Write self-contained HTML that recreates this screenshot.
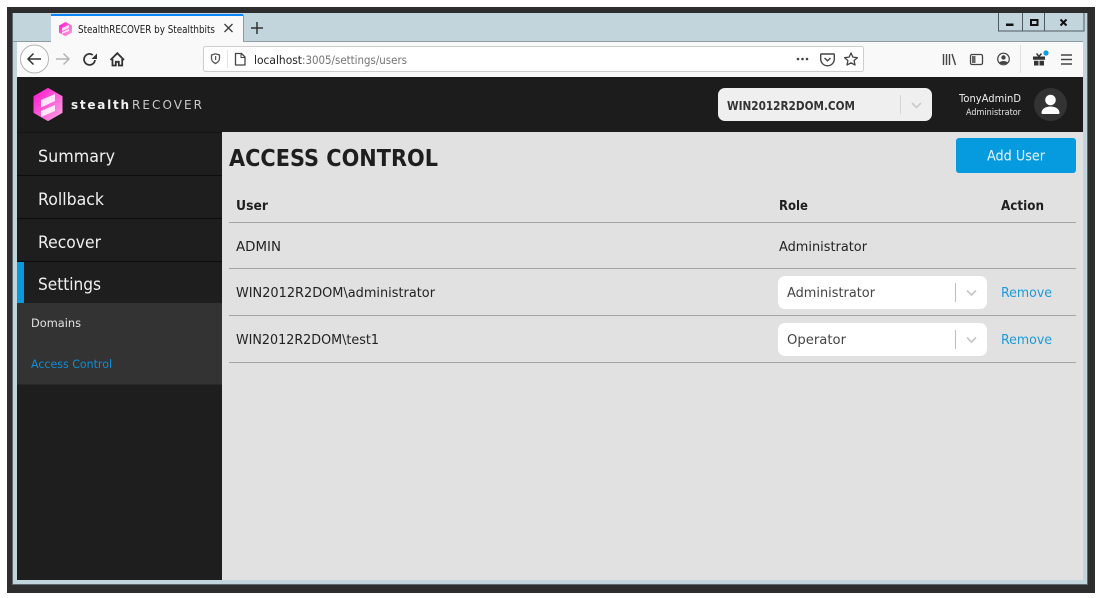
<!DOCTYPE html>
<html lang="en"><head><meta charset="utf-8"><title>StealthRECOVER by Stealthbits</title>
<style>
html,body{margin:0;padding:0;background:#fff;overflow:hidden}
svg{display:block}
text{font-family:"DejaVu Sans","Liberation Sans",sans-serif}
</style></head><body>
<svg xmlns="http://www.w3.org/2000/svg" width="1101" height="598" viewBox="0 0 1101 598">
<defs>
<linearGradient id="g" x1="0" y1="0" x2="1" y2="1"><stop offset="0" stop-color="#ff14cf"/><stop offset="1" stop-color="#ffa4e2"/></linearGradient>
</defs>
<rect width="1101" height="598" fill="#fff"/>
<rect x="7" y="7" width="1088" height="586" fill="#2d2d2d"/>
<rect x="12" y="13" width="1076" height="572" fill="#5f686c"/>
<rect x="13" y="13" width="1074" height="571" fill="#c3d5dc"/>
<rect x="13" y="41" width="1070" height="1" fill="#8d9ca3"/>

<!-- tab -->
<rect x="51" y="14" width="192" height="28" fill="#f9f9fa"/>
<rect x="51" y="14" width="192" height="2" fill="#0a84ff"/>
<rect x="243" y="15" width="1" height="27" fill="#8d9ca3"/>
<path d="M65.500 22.500l6 3.400v6.400l-6 3.400-6-3.400v-6.400z" fill="url(#g)" stroke="url(#g)" stroke-linejoin="round"/><path d="M62 28l7-3v3l-7 3zM62 32l7-3v2l-7 3z" fill="#fff" opacity=".8"/>
<text x="78" y="33" font-size="10.500" fill="#1a1a1a" textLength="137" lengthAdjust="spacingAndGlyphs">StealthRECOVER by Stealthbits</text>
<path d="M224.500 24l8 8M232.500 24l-8 8" stroke="#3c3c3c" stroke-width="1.300" fill="none"/>
<path d="M257 22v12M251 28h12" stroke="#333" stroke-width="1.500" fill="none"/>

<!-- window controls -->
<path d="M998.500 13v18h85.500V13M1022.500 13v18M1044.500 13v18" fill="none" stroke="#4f5a60" stroke-width="1"/>
<rect x="1006" y="23.500" width="7.500" height="2.500" fill="#111"/>
<rect x="1031" y="20" width="6.500" height="5" fill="none" stroke="#111" stroke-width="2"/>
<path d="M1060.500 19.500l6 6M1066.500 19.500l-6 6" stroke="#111" stroke-width="2" fill="none"/>

<!-- toolbar -->
<rect x="17" y="42" width="1066" height="35" fill="#f9f9fa"/>
<circle cx="34.500" cy="59" r="14" fill="#fff" stroke="#b5b5b5"/>
<path d="M41 59H28M33.500 53.500L28 59l5.500 5.500" fill="none" stroke="#333" stroke-width="1.500"/>
<path d="M69 59H56M63.500 53.500L69 59l-5.500 5.500" fill="none" stroke="#b4b4b4" stroke-width="1.500"/>
<path d="M95 60a5.500 5.500 0 1 1-2.200-5" fill="none" stroke="#333" stroke-width="1.700"/><path d="M97 53.500v5.500h-5.500z" fill="#333"/>
<path d="M110.500 60l6.800-6.800L124 60" fill="none" stroke="#333" stroke-width="1.800"/><path d="M112.500 59v6.500h3.300v-3.700h3v3.700h3.400V59" fill="none" stroke="#333" stroke-width="1.800"/>

<rect x="203.500" y="46.500" width="660" height="25" rx="2" fill="#fff" stroke="#cdcdcd"/>
<path d="M211.500 55l4-1.200 4 1.200v3.500c0 2.500-2 4-4 5-2-1-4-2.500-4-5z" fill="none" stroke="#555" stroke-width="1.300"/><rect x="215" y="56" width="1.200" height="4" fill="#555"/>
<rect x="227" y="50" width="1" height="18" fill="#e4e4e4"/>
<path d="M235.500 53.500h6l3.500 3.500v8h-9.500z" fill="none" stroke="#444" stroke-width="1.300" stroke-linejoin="round"/><path d="M241 53.500v4h4" fill="none" stroke="#444" stroke-width="1"/>
<text x="254" y="64" font-size="11.500" fill="#1f1f1f" textLength="48" lengthAdjust="spacingAndGlyphs">localhost</text>
<text x="302" y="64" font-size="11.500" fill="#737373" textLength="105" lengthAdjust="spacingAndGlyphs">:3005/settings/users</text>
<circle cx="798" cy="59" r="1.300" fill="#444"/><circle cx="802.500" cy="59" r="1.300" fill="#444"/><circle cx="807" cy="59" r="1.300" fill="#444"/>
<path d="M821.500 54h12a.8.8 0 0 1 .8.800V59a6.500 6.500 0 0 1-13.600 0v-4.200a.8.800 0 0 1 .8-.800z" fill="none" stroke="#444" stroke-width="1.400"/><path d="M824.500 58l3 2.800 3-2.800" fill="none" stroke="#444" stroke-width="1.400"/>
<path d="M851 53l1.900 4.100 4.500.5-3.300 3 .9 4.400-4-2.200-4 2.200.9-4.400-3.300-3 4.500-.5z" fill="none" stroke="#444" stroke-width="1.300" stroke-linejoin="round"/>
<path d="M943.500 54v11M946.500 54v11M949.500 54v11M952 54l3.500 11" fill="none" stroke="#444" stroke-width="1.400"/>
<rect x="970.500" y="54.500" width="12" height="10" rx="1.500" fill="none" stroke="#444" stroke-width="1.300"/><rect x="972" y="56" width="3.500" height="7" fill="#666"/>
<circle cx="1003.500" cy="59" r="5.800" fill="none" stroke="#444" stroke-width="1.200"/><circle cx="1003.500" cy="57.500" r="2.200" fill="#444"/><path d="M999.500 62.500c1-2 7-2 8 0l-1.500 1.500h-5z" fill="#444"/>
<rect x="1020" y="45" width="1" height="28" fill="#e0e0e0"/>
<path d="M1033 56.500h12v3.300h-12zM1034 60.800h4.500v4.700H1034zM1039.500 60.800h4.500v4.700h-4.500z" fill="#333"/><path d="M1036.500 53.500l2.500 3 2.500-3" fill="none" stroke="#333" stroke-width="1.400"/>
<circle cx="1046" cy="53" r="2.600" fill="#0a9cf5"/>
<path d="M1061 55h11M1061 59.500h11M1061 64h11" stroke="#444" stroke-width="1.400" fill="none"/>

<!-- app header -->
<rect x="17" y="77" width="1066" height="55" fill="#1c1c1c"/>
<path d="M48 89l13.500 7.800v15.400L48 120l-13.500-7.800V96.800z" fill="url(#g)" stroke="url(#g)" stroke-width="2" stroke-linejoin="round"/>
<path d="M41 100l14-6v7l-14 6.500zM41 111l14-6v6l-14 6z" fill="#fff" opacity=".85"/>
<text x="71" y="109" font-size="12" font-weight="bold" fill="#f2f2f2" textLength="58" lengthAdjust="spacing">stealth</text>
<text x="132" y="109" font-size="12" fill="#c9c9c9" textLength="70" lengthAdjust="spacing">RECOVER</text>

<rect x="718" y="88" width="214" height="33" rx="7" fill="#efefef"/>
<text x="727" y="110" font-size="12" font-weight="bold" fill="#333" textLength="128" lengthAdjust="spacingAndGlyphs">WIN2012R2DOM.COM</text>
<rect x="900" y="95" width="1" height="19" fill="#d5d5d5"/>
<path d="M912 103l4.500 4.500 4.500-4.500" fill="none" stroke="#ccc" stroke-width="1.700"/>
<text x="959" y="102" font-size="11" fill="#efefef" textLength="62" lengthAdjust="spacingAndGlyphs">TonyAdminD</text>
<text x="966" y="115" font-size="9" fill="#e4e4e4" textLength="55" lengthAdjust="spacingAndGlyphs">Administrator</text>
<circle cx="1050.500" cy="104.500" r="16.500" fill="#333"/>
<circle cx="1050.500" cy="100" r="5.300" fill="#fff"/>
<path d="M1041.500 113c0-4 4-6.500 9-6.500s9 2.500 9 6.500c0 .5-.5 1-1 1h-16c-.5 0-1-.5-1-1z" fill="#fff"/>

<!-- sidebar -->
<rect x="17" y="132" width="205" height="448" fill="#1e1e1e"/>
<rect x="17" y="132" width="205" height="1" fill="#141414"/>
<rect x="17" y="175" width="205" height="1" fill="#0d0d0d"/>
<rect x="17" y="218" width="205" height="1" fill="#0d0d0d"/>
<rect x="17" y="261" width="205" height="1" fill="#0d0d0d"/>
<rect x="17" y="262" width="7" height="41" fill="#069ade"/>
<rect x="17" y="303" width="205" height="81" fill="#333"/>
<rect x="17" y="384" width="205" height="1" fill="#282828"/>
<text x="38" y="162" font-size="17" fill="#efefef" textLength="77" lengthAdjust="spacingAndGlyphs">Summary</text>
<text x="38" y="205" font-size="17" fill="#efefef" textLength="66" lengthAdjust="spacingAndGlyphs">Rollback</text>
<text x="38" y="248" font-size="17" fill="#efefef" textLength="63" lengthAdjust="spacingAndGlyphs">Recover</text>
<text x="38" y="290" font-size="17" fill="#efefef" textLength="63" lengthAdjust="spacingAndGlyphs">Settings</text>
<text x="31" y="327" font-size="11.500" fill="#e2e2e2" textLength="50" lengthAdjust="spacingAndGlyphs">Domains</text>
<text x="31" y="368" font-size="11.500" fill="#0f8fd6" textLength="81" lengthAdjust="spacingAndGlyphs">Access Control</text>

<!-- main -->
<rect x="222" y="132" width="861" height="448" fill="#e1e1e1"/>
<text x="229" y="166" font-size="23.500" font-weight="bold" fill="#1e1e1e" textLength="209" lengthAdjust="spacingAndGlyphs">ACCESS CONTROL</text>
<rect x="956" y="138" width="120" height="35" rx="3" fill="#069ade"/>
<text x="987" y="160.500" font-size="14" fill="#e6f5fc" textLength="58" lengthAdjust="spacingAndGlyphs">Add User</text>
<text x="236" y="210" font-size="13.500" font-weight="bold" fill="#1e1e1e" textLength="32" lengthAdjust="spacingAndGlyphs">User</text>
<text x="779" y="210" font-size="13.500" font-weight="bold" fill="#1e1e1e" textLength="29" lengthAdjust="spacingAndGlyphs">Role</text>
<text x="1001" y="210" font-size="13.500" font-weight="bold" fill="#1e1e1e" textLength="43" lengthAdjust="spacingAndGlyphs">Action</text>
<rect x="229" y="222" width="847" height="1" fill="#a5a5a5"/>
<rect x="229" y="268" width="847" height="1" fill="#a5a5a5"/>
<rect x="229" y="315" width="847" height="1" fill="#a5a5a5"/>
<rect x="229" y="362" width="847" height="1" fill="#a5a5a5"/>
<text x="236" y="251" font-size="13.500" fill="#222" textLength="45" lengthAdjust="spacingAndGlyphs">ADMIN</text>
<text x="779" y="251" font-size="13.500" fill="#222" textLength="88" lengthAdjust="spacingAndGlyphs">Administrator</text>
<text x="236" y="297" font-size="13.500" fill="#222" textLength="199" lengthAdjust="spacingAndGlyphs">WIN2012R2DOM\administrator</text>
<text x="236" y="344" font-size="13.500" fill="#222" textLength="143" lengthAdjust="spacingAndGlyphs">WIN2012R2DOM\test1</text>

<rect x="778" y="276" width="209" height="33" rx="7" fill="#fff"/>
<text x="787" y="297" font-size="13.500" fill="#444" textLength="88" lengthAdjust="spacingAndGlyphs">Administrator</text>
<rect x="955" y="283" width="1" height="19" fill="#bdbdbd"/>
<path d="M967 290.500l4.500 4.500 4.500-4.500" fill="none" stroke="#c8c8c8" stroke-width="1.700"/>
<text x="1001" y="297" font-size="13.500" fill="#1a9bdb" textLength="51" lengthAdjust="spacingAndGlyphs">Remove</text>

<rect x="778" y="323" width="209" height="33" rx="7" fill="#fff"/>
<text x="787" y="344" font-size="13.500" fill="#444" textLength="59" lengthAdjust="spacingAndGlyphs">Operator</text>
<rect x="955" y="330" width="1" height="19" fill="#bdbdbd"/>
<path d="M967 337.500l4.500 4.500 4.500-4.500" fill="none" stroke="#c8c8c8" stroke-width="1.700"/>
<text x="1001" y="344" font-size="13.500" fill="#1a9bdb" textLength="51" lengthAdjust="spacingAndGlyphs">Remove</text>
</svg>
</body></html>
